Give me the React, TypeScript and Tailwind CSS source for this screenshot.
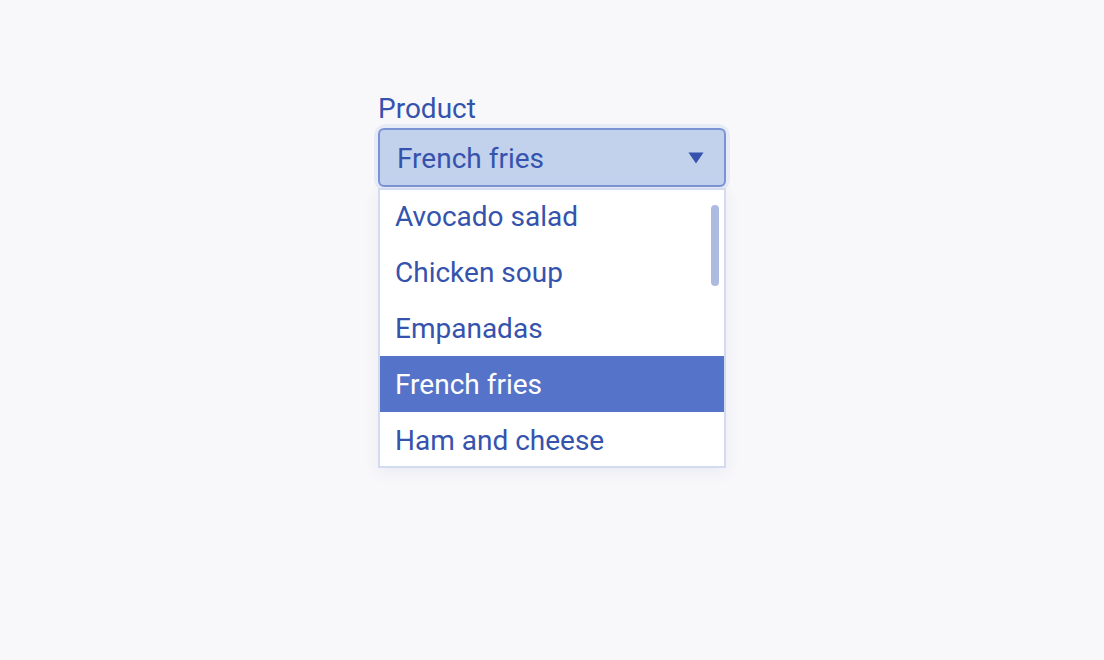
import React from "react";

const items = ["Avocado salad", "Chicken soup", "Empanadas", "French fries", "Ham and cheese"];

export default function App() {
  return (
    <div
      className="w-[1104px] h-[660px] bg-[#f8f8fa] flex justify-center"
      style={{ fontFamily: "Roboto, 'Liberation Sans', sans-serif" }}
    >
      <div className="w-[348px] pt-[92px]">
        <div className="text-[28px] leading-[34px] text-[#3553ad]">Product</div>
        <div className="mt-[2px] rounded-[8px] ring-4 ring-[#e7ebf7]">
          <div className="h-[59px] rounded-[6px] border-2 border-[#7b93d4] bg-[#c2d1ec] flex items-center justify-between pl-[17px] pr-[20px]">
            <span className="text-[28px] text-[#3553ad] pt-[2px]">French fries</span>
            <svg width="16" height="12" viewBox="0 0 16 12">
              <path d="M0.5 0.5 L15.5 0.5 L8 11.5 Z" fill="#3553ad" />
            </svg>
          </div>
        </div>
        <div className="mt-[1px] h-[280px] overflow-hidden relative bg-white border-2 border-[#d3dbf0] shadow-[0_4px_14px_rgba(60,80,160,0.08)]">
          <div className="-mt-[2px]">
            {items.map((it) => (
              <div
                key={it}
                className={
                  it === "French fries"
                    ? "h-[56px] flex items-center pl-[15px] pt-[2px] text-[28px] bg-[#5573c9] text-white"
                    : "h-[56px] flex items-center pl-[15px] pt-[2px] text-[28px] text-[#3553ad]"
                }
              >
                {it}
              </div>
            ))}
          </div>
          <div className="absolute right-[5px] top-[15px] w-[8px] h-[81px] rounded-full bg-[#aebbe0]" />
        </div>
      </div>
    </div>
  );
}
